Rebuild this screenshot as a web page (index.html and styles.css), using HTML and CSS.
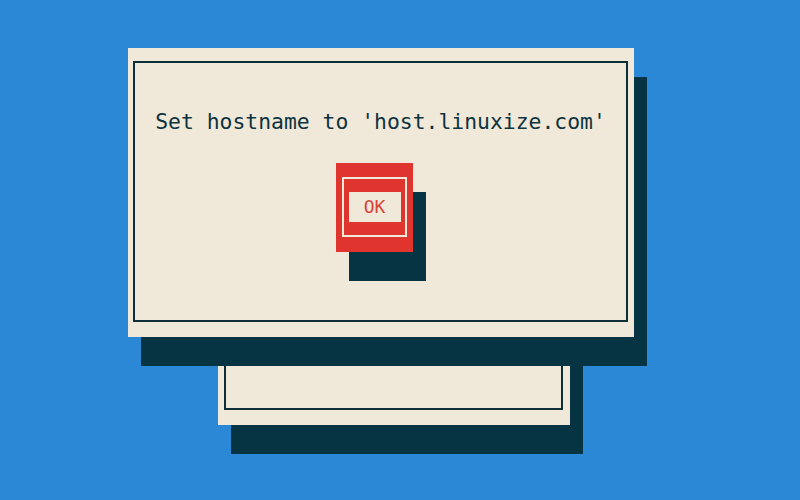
FILE: index.html
```html
<!DOCTYPE html>
<html lang="en">
<head>
    <meta charset="UTF-8">
    <meta name="viewport" content="width=device-width, initial-scale=1.0">
    <title>hostnamectl</title>
    <link rel="stylesheet" href="styles.css">
</head>
<body>
    <div class="desktop">
        <!-- window underneath, mostly covered -->
        <div class="dialog dialog-back">
            <div class="frame"></div>
        </div>

        <div class="dialog dialog-main">
            <div class="frame">
                <p class="message">Set hostname to 'host.linuxize.com'</p>
                <div class="button">
                    <div class="button-frame">
                        <span class="button-label">OK</span>
                    </div>
                </div>
            </div>
        </div>
    </div>
</body>
</html>
```

FILE: styles.css
```css
* {
    margin: 0;
    padding: 0;
    box-sizing: border-box;
}
body {
    background-color: #2a88d6;
    font-family: "DejaVu Sans Mono", "Liberation Mono", monospace;
    overflow: hidden;
}
.desktop {
    position: relative;
    width: 800px;
    height: 500px;
}
.dialog {
    position: absolute;
    background-color: #f0e8d8;
    box-shadow: 13px 29px 0 #073443;
}
.dialog-main {
    left: 128px;
    top: 48px;
    width: 506px;
    height: 289px;
    padding: 13px 6px 15px 5px;
}
.dialog-back {
    left: 218px;
    top: 300px;
    width: 352px;
    height: 125px;
    padding: 13px 7px 15px 6px;
}
.frame {
    height: 100%;
    border: 2px solid #0f2f38;
    display: flex;
    flex-direction: column;
    align-items: center;
}
.message {
    margin-top: 46px;
    font-size: 21.4px;
    line-height: 26px;
    color: #0e3340;
    white-space: pre;
}
.button {
    margin-top: 28px;
    margin-right: 13px;
    width: 77px;
    height: 89px;
    background-color: #e0352f;
    padding: 14px 6px 15px 6px;
    box-shadow: 13px 29px 0 #073443;
}
.button-frame {
    height: 100%;
    border: 2px solid #f0e8d8;
    display: flex;
    align-items: center;
    justify-content: center;
}
.button-label {
    margin-left: 1px;
    width: 52px;
    height: 30px;
    background-color: #f0e8d8;
    color: #d9443a;
    font-size: 18px;
    line-height: 30px;
    text-align: center;
}
```
